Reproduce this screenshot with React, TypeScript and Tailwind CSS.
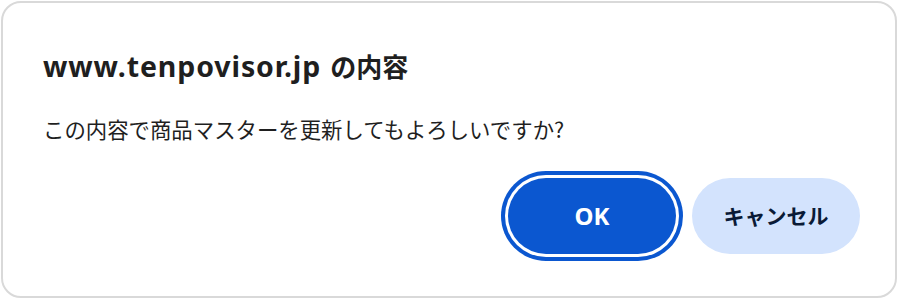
export default function App() {
  return (
    <div className="w-[898px] h-[300px] bg-white p-px">
      <div className="w-[896px] h-[297px] bg-white border-2 border-[#d9d9d9] rounded-[20px] flex flex-col pt-[46px] pl-[40px] pr-[35px] font-['Noto_Sans','Noto_Sans_CJK_JP',sans-serif] text-[#1f1f1f]">
        <h1 className="h-[33px] leading-[33px] font-bold flex items-baseline">
          <span className="text-[28.5px] tracking-[0.9px]">www.tenpovisor.jp</span>
          <span className="text-[26px] ml-[9px] font-['Noto_Sans_CJK_JP',sans-serif]">の内容</span>
        </h1>
        <p className="mt-[33px] text-[21.4px] leading-[28px] font-['Noto_Sans_CJK_JP',sans-serif]">
          この内容で商品マスターを更新してもよろしいですか?
        </p>
        <div className="mt-[35px] flex justify-end gap-4">
          <button className="w-[168px] h-[76px] rounded-full bg-[#0b57d0] text-white text-[24px] font-bold ring-4 ring-[#0b57d0] ring-offset-[3px] ring-offset-white">
            OK
          </button>
          <button className="w-[168px] h-[76px] rounded-full bg-[#d3e3fd] text-[#0a1a36] text-[21px] font-bold font-['Noto_Sans_CJK_JP',sans-serif]">
            キャンセル
          </button>
        </div>
      </div>
    </div>
  );
}
